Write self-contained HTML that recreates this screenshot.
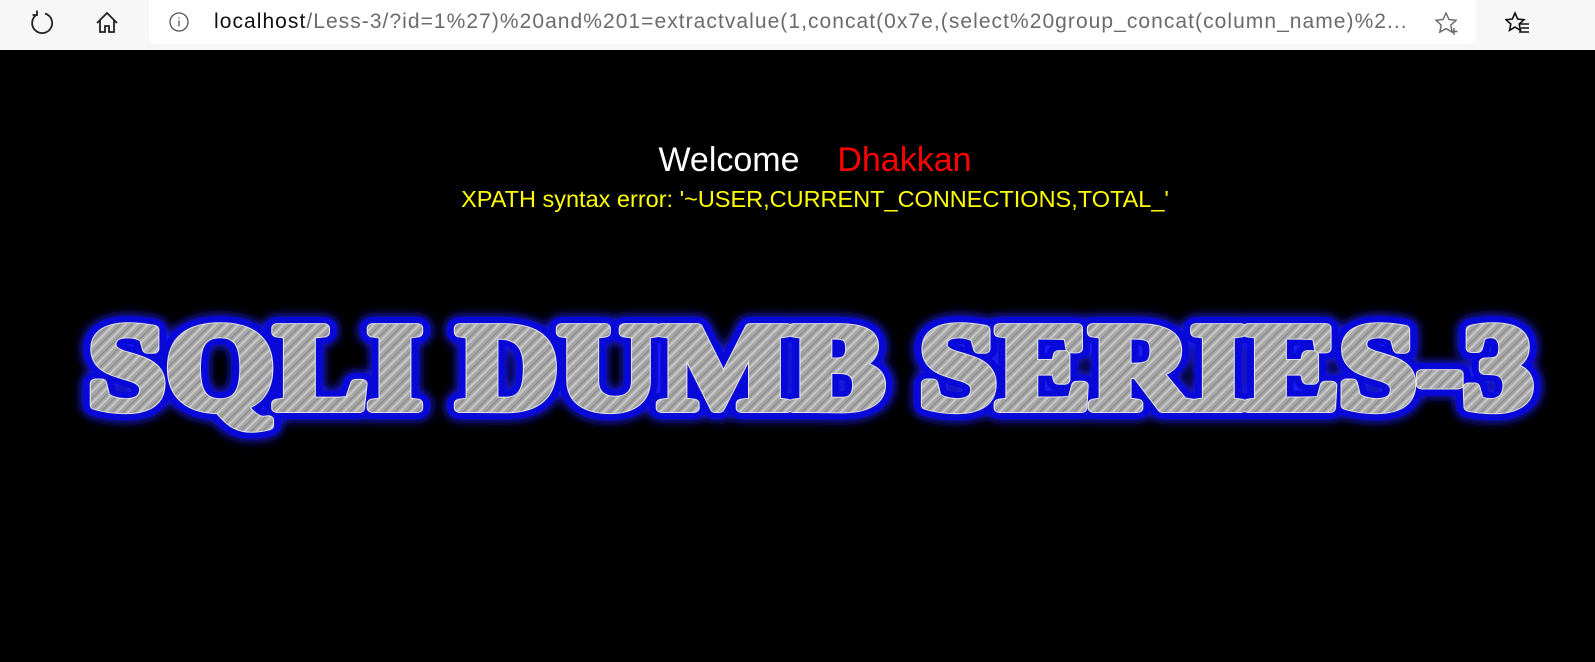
<!DOCTYPE html>
<html><head><meta charset="utf-8"><style>
*{margin:0;padding:0;box-sizing:border-box}
body{width:1595px;height:662px;background:#000;overflow:hidden;font-family:"Liberation Sans",sans-serif}
.bar{position:absolute;left:0;top:0;width:1595px;height:50px;background:#f7f7f7}
.addr{position:absolute;left:149px;top:0;width:1327px;height:44px;background:#fff;border-radius:0 0 8px 8px}
.url{position:absolute;left:214px;top:10px;font-size:21px;color:#6b6b6b;white-space:nowrap;letter-spacing:1.05px}
.url b{font-weight:normal;color:#111}
.w{position:absolute;top:141px;left:0;width:1630px;text-align:center;font-size:34px;color:#fff}
.e{position:absolute;top:186px;left:0;width:1630px;text-align:center;font-size:23.5px;color:#ff0}
</style></head><body>
<div class="bar">
<svg style="position:absolute;left:28px;top:9px" width="28" height="28" viewBox="0 0 28 28" fill="none" stroke="#222" stroke-width="1.8"><path d="M9 5.5A10 10 0 1 0 17 4.5"/><path d="M9 1.5V6H4.5"/></svg>
<svg style="position:absolute;left:94px;top:10px" width="26" height="26" viewBox="0 0 26 26" fill="none" stroke="#222" stroke-width="1.8"><path d="M3 13L13 3l10 10M6 10v12h5v-6h4v6h5V10"/></svg>
<div class="addr"></div>
<svg style="position:absolute;left:168px;top:11px" width="22" height="22" viewBox="0 0 22 22" fill="none" stroke="#555" stroke-width="1.3"><circle cx="11" cy="11" r="9"/><path d="M11 9.5v6M11 6.5v1.2"/></svg>
<div class="url"><b>localhost</b>/Less-3/?id=1%27)%20and%201=extractvalue(1,concat(0x7e,(select%20group_concat(column_name)%2...</div>
<svg style="position:absolute;left:1434px;top:11px" width="26" height="26" viewBox="0 0 26 26" fill="none" stroke="#666" stroke-width="1.4"><path d="M12 2l3 6.5 7 .8-5.2 4.8 1.4 7L12 17.6 5.8 21.1l1.4-7L2 9.3l7-.8z"/><path d="M20 17v7M16.5 20.5h7"/></svg>
<svg style="position:absolute;left:1505px;top:11px" width="26" height="26" viewBox="0 0 26 26" fill="none" stroke="#111" stroke-width="1.6"><path d="M10 2l2.6 6 6.4.7-4.8 4.3 1.3 6.4L10 16.1 4.5 19.4l1.3-6.4L1 8.7l6.4-.7z"/><path d="M15 13h9M16 17h8M14 21h10"/></svg>
</div>
<div class="w">Welcome&nbsp;&nbsp;&nbsp;&nbsp;<span style="color:#f00">Dhakkan</span></div>
<div class="e">XPATH syntax error: '~USER,CURRENT_CONNECTIONS,TOTAL_'</div>
<svg style="position:absolute;left:0;top:290px" width="1595" height="170" viewBox="0 0 1595 170">
<defs>
<pattern id="m" width="8" height="8" patternUnits="userSpaceOnUse" patternTransform="rotate(45)">
<rect width="8" height="8" fill="#a6a6a6"/><rect width="2" height="8" fill="#c8c8c8"/><rect x="5" width="1" height="8" fill="#858585"/></pattern>
<filter id="g" x="-5%" y="-30%" width="110%" height="160%"><feGaussianBlur stdDeviation="5"/></filter>
</defs>
<g font-family="'Liberation Serif',serif" font-weight="bold" font-size="122" stroke-linejoin="round">
<text x="88" y="118" textLength="1445" lengthAdjust="spacingAndGlyphs" fill="#1515ff" stroke="#1a1aff" stroke-width="24" filter="url(#g)">SQLI DUMB SERIES-3</text>
<text x="88" y="118" textLength="1445" lengthAdjust="spacingAndGlyphs" fill="none" stroke="#0808d8" stroke-width="22">SQLI DUMB SERIES-3</text>
<text x="88" y="118" textLength="1445" lengthAdjust="spacingAndGlyphs" fill="none" stroke="#e0e0e0" stroke-width="10">SQLI DUMB SERIES-3</text>
<text x="88" y="118" textLength="1445" lengthAdjust="spacingAndGlyphs" fill="url(#m)" stroke="url(#m)" stroke-width="8">SQLI DUMB SERIES-3</text>
</g>
</svg>
</body></html>
